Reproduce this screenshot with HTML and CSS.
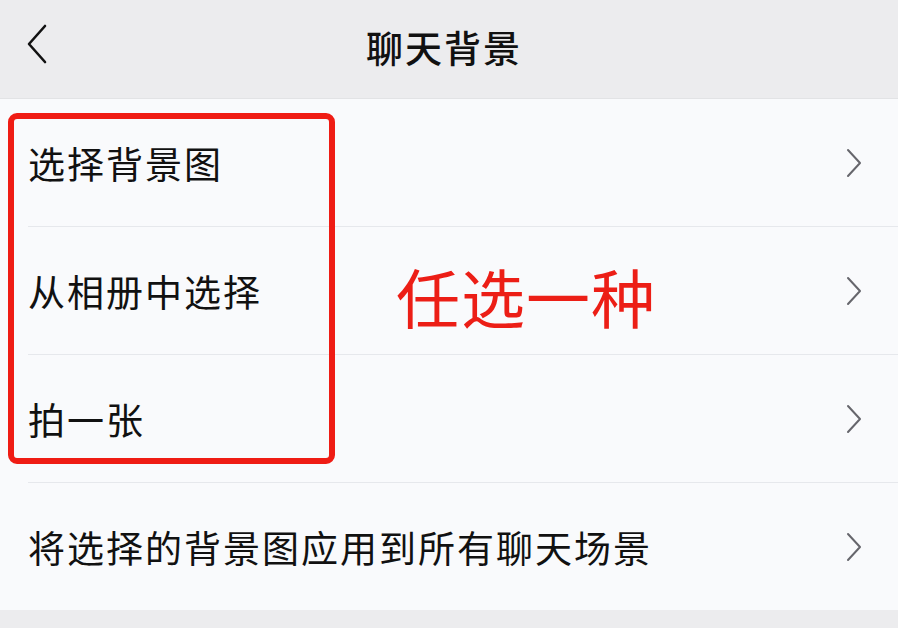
FILE: index.html
```html
<!DOCTYPE html>
<html lang="zh">
<head>
<meta charset="utf-8">
<link rel="stylesheet" href="styles.css">
</head>
<body>
<div class="page">
  <header class="topbar">
    <span class="back">
      <svg width="22" height="40" viewBox="0 0 22 40"><path d="M19 2 L3 20 L19 38" fill="none" stroke="#111" stroke-width="2.6" stroke-linecap="round" stroke-linejoin="round"/></svg>
    </span>
    <h1 class="title">聊天背景</h1>
  </header>
  <main class="list">
    <div class="row"><span class="label">选择背景图</span><svg class="chev" width="16" height="30" viewBox="0 0 16 30"><path d="M2 2 L14 15 L2 28" fill="none" stroke="#66666c" stroke-width="2" stroke-linecap="round" stroke-linejoin="round"/></svg></div>
    <div class="row"><span class="label">从相册中选择</span><svg class="chev" width="16" height="30" viewBox="0 0 16 30"><path d="M2 2 L14 15 L2 28" fill="none" stroke="#66666c" stroke-width="2" stroke-linecap="round" stroke-linejoin="round"/></svg></div>
    <div class="row"><span class="label">拍一张</span><svg class="chev" width="16" height="30" viewBox="0 0 16 30"><path d="M2 2 L14 15 L2 28" fill="none" stroke="#66666c" stroke-width="2" stroke-linecap="round" stroke-linejoin="round"/></svg></div>
    <div class="row last"><span class="label">将选择的背景图应用到所有聊天场景</span><svg class="chev" width="16" height="30" viewBox="0 0 16 30"><path d="M2 2 L14 15 L2 28" fill="none" stroke="#66666c" stroke-width="2" stroke-linecap="round" stroke-linejoin="round"/></svg></div>
    <div class="highlight"></div>
    <div class="note">任选一种</div>
  </main>
  <div class="footer"></div>
</div>
</body>
</html>
```

FILE: styles.css
```css
* { box-sizing: border-box; margin: 0; padding: 0; }
html, body { width: 898px; height: 628px; overflow: hidden; }
body {
  background: #ececee;
  font-family: "Noto Sans CJK SC", "Noto Sans", sans-serif;
  color: #111;
}
.page { display: flex; flex-direction: column; height: 628px; }
.topbar {
  height: 99px;
  background: #ececee;
  border-bottom: 1px solid #e2e3e5;
  display: flex;
  align-items: center;
  justify-content: center;
  position: relative;
}
.back {
  position: absolute;
  left: 26px;
  top: 24px;
  display: flex;
}
.title {
  font-size: 37px;
  font-weight: 500;
  letter-spacing: 2px;
  line-height: 1;
  margin-top: -4px;
  margin-right: 10px;
}
.list {
  position: relative;
  background: #f9fafc;
  display: flex;
  flex-direction: column;
}
.row {
  height: 128px;
  display: flex;
  align-items: center;
  justify-content: space-between;
  margin-left: 28px;
  padding-right: 36px;
  border-bottom: 1px solid #e6e8ec;
}
.row.last { border-bottom: none; height: 127px; }
.label {
  font-size: 37px;
  line-height: 1;
  letter-spacing: 2px;
  margin-top: 2px;
}
.chev { display: block; }
.highlight {
  position: absolute;
  left: 8px;
  top: 14px;
  width: 327px;
  height: 351px;
  border: 6px solid #ef1c14;
  border-radius: 9px;
}
.note {
  position: absolute;
  left: 396px;
  top: 164px;
  font-size: 64px;
  line-height: 1;
  color: #ec1e16;
  letter-spacing: 1px;
}
.footer { flex: 1; background: #ececee; }
```
